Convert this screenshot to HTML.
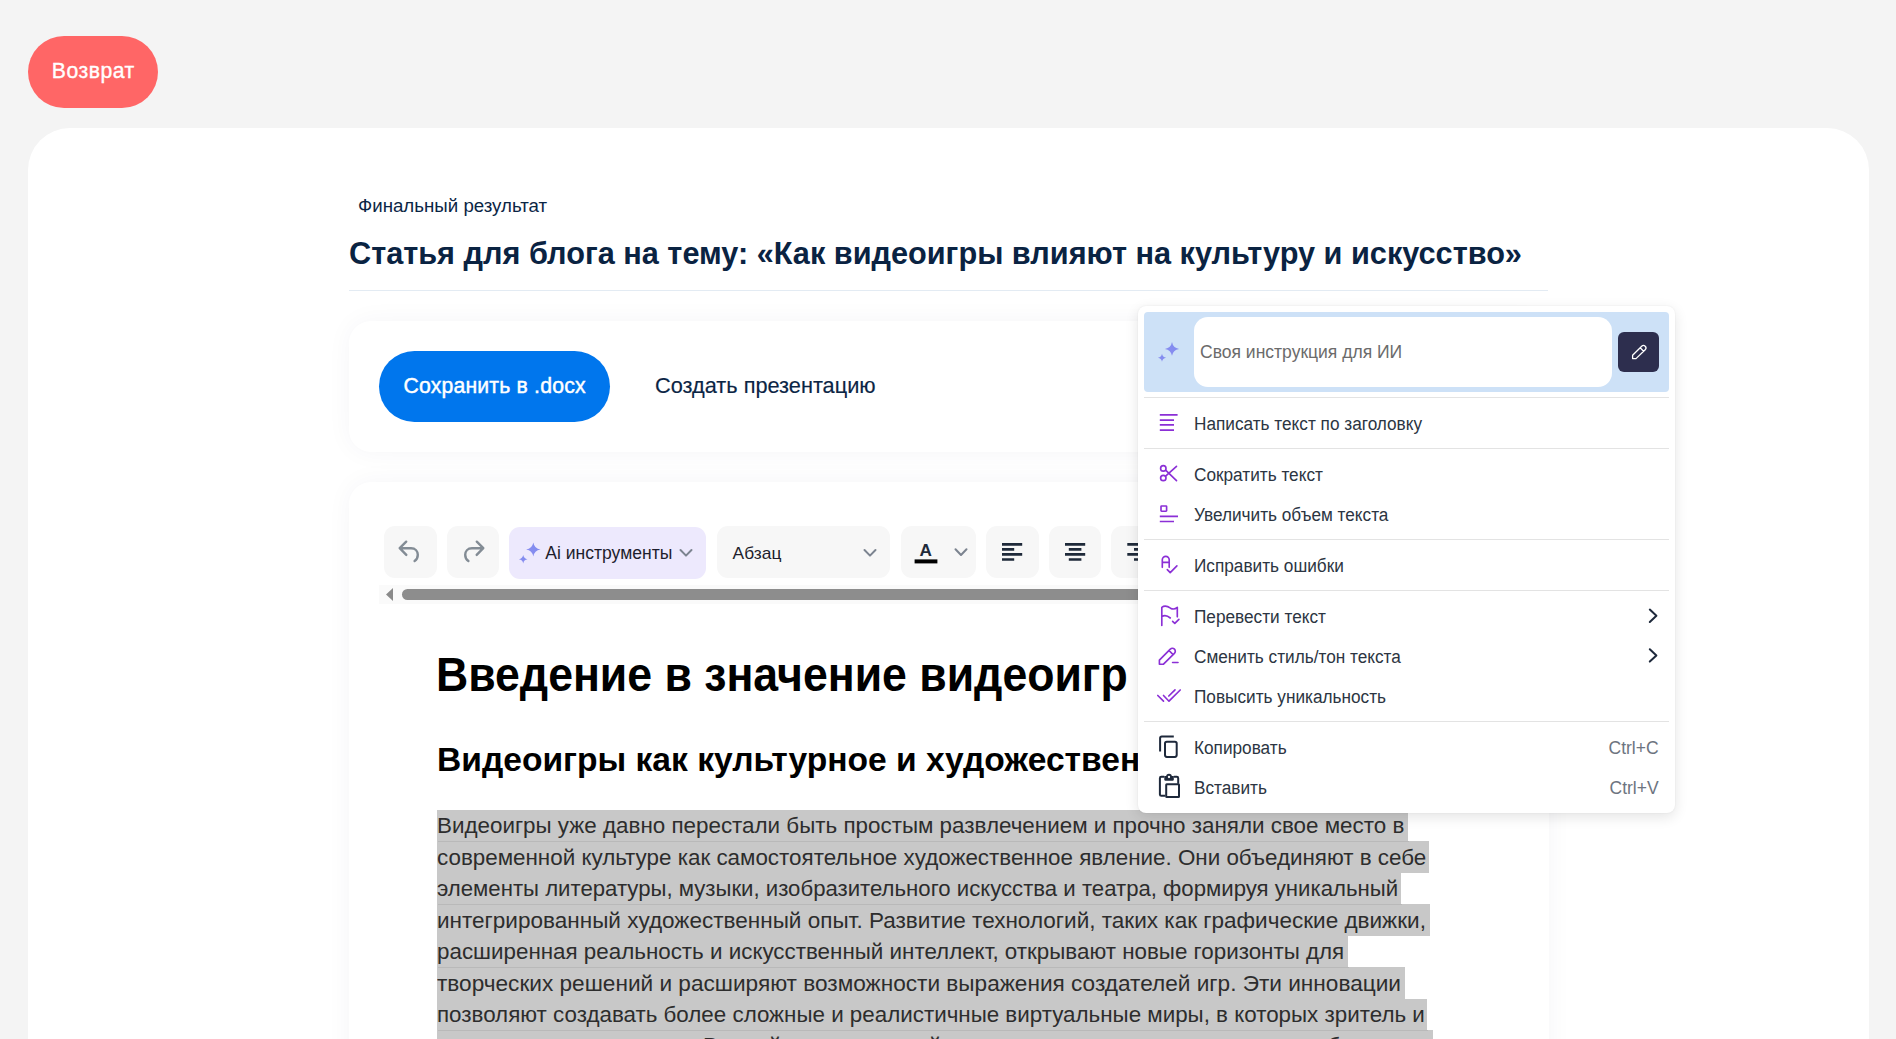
<!DOCTYPE html>
<html lang="ru">
<head>
<meta charset="utf-8">
<style>
*{box-sizing:border-box;margin:0;padding:0}
html,body{width:1896px;height:1039px;overflow:hidden;background:#f4f4f4;font-family:"Liberation Sans",sans-serif}
.abs{position:absolute}
.nw{white-space:nowrap}
#back{left:28px;top:36px;width:130px;height:72px;border-radius:36px;background:#ff6666}
#backt{left:28.3px;width:130px;top:60.2px;font-size:21.2px;line-height:21.2px;letter-spacing:0.5px;font-weight:400;-webkit-text-stroke:0.35px #fff;color:#fff;text-align:center}
#main{left:28px;top:128px;width:1841px;height:1000px;background:#fff;border-radius:42px}
#sub{left:358px;top:196.6px;font-size:18.7px;color:#0b2545;line-height:18.7px}
#title{left:349px;top:236.6px;font-size:30.68px;font-weight:700;color:#0a2342;line-height:34px}
#hr{left:349px;top:290px;width:1199px;height:1px;background:#e3ebf3}
#card1{left:349px;top:321px;width:1200px;height:131px;background:#fff;border-radius:22px;box-shadow:0 0 26px rgba(30,50,90,0.045)}
#save{left:379px;top:350.8px;width:231px;height:70.8px;border-radius:35.4px;background:#0076ed;color:#fff;font-size:21.2px;font-weight:400;-webkit-text-stroke:0.45px #fff;line-height:70px;text-align:center;letter-spacing:0.2px;text-indent:0.2px}
#pres{left:655px;top:373.9px;font-size:21.74px;-webkit-text-stroke:0.15px #0b2545;color:#0b2545;line-height:24px}
#card2{left:349px;top:482px;width:1200px;height:700px;background:#fff;border-radius:22px;box-shadow:0 0 26px rgba(30,50,90,0.045)}
.tb{position:absolute;top:526px;height:52px;background:#f7f7f7;border-radius:11px}
.sel{left:437.2px;height:31.7px;background:#c8c8c8}
.ptxt{left:437.1px;font-size:22.5px;line-height:31.45px;color:#2d2d2d;transform-origin:0 0}
#menu{left:1138px;top:306px;width:537px;height:507px;background:#fff;border-radius:8px;box-shadow:0 4px 14px rgba(0,0,0,0.11),0 0 2px rgba(0,0,0,0.07)}
.mdiv{left:1144px;width:525px;height:1px;background:#e3e3e3}
.mi{left:1194.4px;font-size:18px;line-height:18px;color:#2c3542;transform:scaleX(0.956);transform-origin:0 0}
.mk{right:237.4px;font-size:17.5px;line-height:17.5px;color:#6d7480}
</style>
</head>
<body>
<div id="back" class="abs"></div><div id="backt" class="abs nw">Возврат</div>
<div id="main" class="abs"></div>
<div id="sub" class="abs nw">Финальный результат</div>
<div id="title" class="abs nw">Статья для блога на тему: «Как видеоигры влияют на культуру и искусство»</div>
<div id="hr" class="abs"></div>
<div id="card1" class="abs"></div>
<div id="save" class="abs nw">Сохранить в .docx</div>
<div id="pres" class="abs nw">Создать презентацию</div>
<div id="card2" class="abs"></div>

<!-- toolbar -->
<div class="tb" style="left:384px;width:53px"></div>
<div class="tb" style="left:447px;width:52px"></div>
<div class="tb" style="left:509px;width:197px;background:#ede9fd;top:527px"></div>
<div class="tb" style="left:717px;width:173px"></div>
<div class="tb" style="left:901px;width:75px"></div>
<div class="tb" style="left:986px;width:53px"></div>
<div class="tb" style="left:1049px;width:52px"></div>
<div class="tb" style="left:1111px;width:52px"></div>

<!-- toolbar icons -->
<svg class="abs" style="left:0;top:0" width="1896" height="1039" viewBox="0 0 1896 1039" fill="none">
  <g stroke="#838c95" stroke-width="2.4" stroke-linecap="round" stroke-linejoin="round">
    <path d="M406.2 541.7 L399.7 548.2 L406.3 554.9 M400 548.2 H411 C415.4 548.2 417.8 551.4 417.8 554.8 C417.8 557.5 416.6 559.8 414.6 561.1"/>
    <path d="M476.8 541.7 L483.3 548.2 L476.7 554.9 M483 548.2 H472 C467.6 548.2 465.2 551.4 465.2 554.8 C465.2 557.5 466.4 559.8 468.4 561.1"/>
    <path d="M680.5 550 L686 555.6 L691.5 550" stroke="#7c8490" stroke-width="2"/>
    <path d="M864.5 550 L870 555.6 L875.5 550" stroke="#7c8490" stroke-width="2"/>
    <path d="M955.5 549.2 L961 555 L966.5 549.2" stroke="#7c8490" stroke-width="2"/>
  </g>
  <defs>
    <linearGradient id="sg" x1="0" y1="1" x2="1" y2="0">
      <stop offset="0" stop-color="#8c8df0"/><stop offset="1" stop-color="#7d8cef"/>
    </linearGradient>
  </defs>
  <g fill="url(#sg)">
    <path d="M533.30 542.60 Q534.31 548.62 540.50 549.60 Q534.31 550.58 533.30 556.60 Q532.29 550.58 526.10 549.60 Q532.29 548.62 533.30 542.60Z"/>
    <path d="M523.20 555.10 Q523.80 558.71 527.50 559.30 Q523.80 559.89 523.20 563.50 Q522.60 559.89 518.90 559.30 Q522.60 558.71 523.20 555.10Z"/>
  </g>
  <!-- color A -->
  <rect x="914.6" y="559.4" width="22.8" height="4" fill="#000"/>
  <g stroke="#1f2a3a" stroke-width="2.7" stroke-linecap="butt">
    <path d="M1002 544.3 H1022.2 M1002 549.4 H1014.2 M1002 554.4 H1022.2 M1002 559.5 H1014.2"/>
    <path d="M1065 544.3 H1085.2 M1068.8 549.4 H1081.4 M1065 554.4 H1085.2 M1068.8 559.5 H1081.4"/>
    <path d="M1127.3 544.3 H1147.5 M1134 549.4 H1147.5 M1127.3 554.4 H1147.5 M1134 559.5 H1147.5"/>
  </g>
  <!-- scrollbar -->
  <rect x="379" y="585" width="800" height="19" fill="#fafafa"/>
  <path d="M386 594.5 L393 588 L393 601 Z" fill="#8a8a8a"/>
  <rect x="402" y="589" width="760" height="11" rx="5.5" fill="#8d8d8d"/>
</svg>
<div class="abs nw" style="left:545.3px;top:544.8px;font-size:17.55px;line-height:17.55px;color:#1e1e2d">Ai инструменты</div>
<div class="abs nw" style="left:732.6px;top:545.3px;font-size:17.39px;line-height:17.39px;color:#1e1e2d">Абзац</div>
<div class="abs nw" style="left:919.6px;top:542.2px;font-size:17.2px;line-height:17.2px;font-weight:700;color:#1f2a3a">A</div>

<!-- document -->
<div class="abs nw" style="left:436px;top:651.2px;font-size:47.2px;line-height:47.2px;font-weight:700;color:#000;transform:scaleX(0.945);transform-origin:0 0">Введение в значение видеоигр</div>
<div class="abs nw" style="left:437px;top:742.6px;font-size:33.6px;line-height:33.6px;font-weight:700;color:#000">Видеоигры как культурное и художественное явление</div>
<div class="abs sel" style="top:809.80px;width:971.1px"></div>
<div class="abs sel" style="top:841.25px;width:992.0px"></div>
<div class="abs sel" style="top:872.70px;width:964.3px"></div>
<div class="abs sel" style="top:904.15px;width:992.6px"></div>
<div class="abs sel" style="top:935.60px;width:911.2px"></div>
<div class="abs sel" style="top:967.05px;width:968.1px"></div>
<div class="abs sel" style="top:998.50px;width:990.3px"></div>
<div class="abs sel" style="top:1029.95px;width:995.4px"></div>
<div class="abs nw ptxt" style="top:810.30px;transform:scaleX(0.9952)">Видеоигры уже давно перестали быть простым развлечением и прочно заняли свое место в </div>
<div class="abs nw ptxt" style="top:841.75px;transform:scaleX(0.9947)">современной культуре как самостоятельное художественное явление. Они объединяют в себе </div>
<div class="abs nw ptxt" style="top:873.20px;transform:scaleX(0.9854)">элементы литературы, музыки, изобразительного искусства и театра, формируя уникальный </div>
<div class="abs nw ptxt" style="top:904.65px;transform:scaleX(1.0012)">интегрированный художественный опыт. Развитие технологий, таких как графические движки, </div>
<div class="abs nw ptxt" style="top:936.10px;transform:scaleX(0.9942)">расширенная реальность и искусственный интеллект, открывают новые горизонты для </div>
<div class="abs nw ptxt" style="top:967.55px;transform:scaleX(1.0049)">творческих решений и расширяют возможности выражения создателей игр. Эти инновации </div>
<div class="abs nw ptxt" style="top:999.00px;transform:scaleX(0.9939)">позволяют создавать более сложные и реалистичные виртуальные миры, в которых зритель и </div>
<div class="abs nw ptxt" style="top:1030.45px;transform:scaleX(0.991)">игрок становится частью </div>
<div class="abs nw ptxt" style="top:1030.45px;left:702.6px;transform:scaleX(0.991)">В такой интерактивной среде каждое решение </div>
<div class="abs nw ptxt" style="top:1030.45px;left:1315.1px;transform:scaleX(0.991)">обретает</div>
<div class="abs" style="left:437.5px;top:841.0px;width:971.1px;height:1px;background:#b9b9b9"></div>
<div class="abs" style="left:437.5px;top:904.2px;width:964.3px;height:1px;background:#b9b9b9"></div>
<div class="abs" style="left:437.5px;top:967.1px;width:911.2px;height:1px;background:#b9b9b9"></div>
<div class="abs" style="left:437.5px;top:1029.7px;width:990.3px;height:1px;background:#b9b9b9"></div>

<!-- context menu -->
<div class="abs" id="menu"></div>
<div class="abs" style="left:1144px;top:312px;width:525px;height:80px;background:#cde1f7;border-radius:4px"></div>
<div class="abs" style="left:1194px;top:317px;width:418px;height:70px;background:#fff;border-radius:14px"></div>
<div class="abs nw" style="left:1200px;top:344.2px;font-size:17.53px;line-height:17.53px;color:#6b6b6b">Своя инструкция для ИИ</div>
<div class="abs" style="left:1618px;top:332px;width:41px;height:40px;background:#2d2e4e;border-radius:6px"></div>
<div class="abs mdiv" style="top:397px"></div>
<div class="abs mdiv" style="top:448px"></div>
<div class="abs mdiv" style="top:539px"></div>
<div class="abs mdiv" style="top:590px"></div>
<div class="abs mdiv" style="top:721px"></div>
<div class="abs nw mi" style="top:415.06px">Написать текст по заголовку</div>
<div class="abs nw mi" style="top:466.06px">Сократить текст</div>
<div class="abs nw mi" style="top:506.06px">Увеличить объем текста</div>
<div class="abs nw mi" style="top:557.06px">Исправить ошибки</div>
<div class="abs nw mi" style="top:608.06px">Перевести текст</div>
<div class="abs nw mi" style="top:648.06px">Сменить стиль/тон текста</div>
<div class="abs nw mi" style="top:688.06px">Повысить уникальность</div>
<div class="abs nw mi" style="top:739.06px">Копировать</div>
<div class="abs nw mi" style="top:779.06px">Вставить</div>
<div class="abs nw mk" style="top:739.5px">Ctrl+C</div>
<div class="abs nw mk" style="top:779.5px">Ctrl+V</div>
<svg class="abs" style="left:0;top:0" width="1896" height="1039" viewBox="0 0 1896 1039" fill="none">
  <g fill="url(#sg)">
    <path d="M1172.00 342.00 Q1172.99 347.93 1179.10 348.90 Q1172.99 349.87 1172.00 355.80 Q1171.01 349.87 1164.90 348.90 Q1171.01 347.93 1172.00 342.00Z"/>
    <path d="M1162.00 353.80 Q1162.57 357.24 1166.10 357.80 Q1162.57 358.36 1162.00 361.80 Q1161.43 358.36 1157.90 357.80 Q1161.43 357.24 1162.00 353.80Z"/>
  </g>
  <g stroke="#fff" stroke-width="1.3" stroke-linejoin="round" stroke-linecap="round">
    <path d="M1632.6 358.6 L1632.6 355.3 L1641.7 346.2 A1.75 1.75 0 0 1 1645.2 349.7 L1636 358.6 Z M1640.2 347.8 L1643.6 351.2"/>
  </g>
  <g stroke="#8b2fd6" stroke-width="1.65" stroke-linecap="round" stroke-linejoin="round">
    <path stroke-linecap="butt" d="M1159.8 414.9 H1177.6 M1159.8 420.1 H1174 M1159.8 424.9 H1174 M1159.8 430.1 H1174"/>
    <circle cx="1163.3" cy="468.4" r="2.7"/>
    <circle cx="1163.3" cy="478" r="2.7"/>
    <path d="M1165.6 470.2 L1176.5 480.7 M1165.6 476.2 L1176.5 466.4"/>
    <rect x="1161" y="506" width="5.6" height="5.2" rx="0.6"/>
    <path stroke-linecap="butt" d="M1159.8 516.4 H1178 M1159.8 521.5 H1174"/>
    <path d="M1162.3 567.3 V559.8 A3.45 3.45 0 0 1 1169.2 559.8 V567.3 M1162.3 562.3 H1169.2 M1167.3 569.7 L1170.2 572.6 L1176.9 565.9"/>
    <path d="M1161.8 625.5 V607.3 Q1165.5 604.6 1170.5 608.2 Q1174 610.2 1177.3 607.3 V616.8 M1161.8 616.6 Q1165.8 614.2 1170.3 618 M1172.6 621.3 L1174.8 623.4 L1178.9 619.3"/>
    <path d="M1159.4 664.2 H1163.5 L1174.4 653.3 A2.9 2.9 0 1 0 1170.3 649.2 L1159.4 660.1 Z M1169 650.5 L1173.1 654.6 M1172.6 662.5 H1178"/>
    <path d="M1157.8 695.5 L1163.5 701.2 M1163.5 695.5 L1169 701.2 L1180.2 690 M1168.8 696 L1175 689.8"/>
  </g>
  <g stroke="#1e293b" stroke-width="2" stroke-linecap="butt" stroke-linejoin="round">
    <path d="M1160.1 751.5 V738.3 Q1160.1 736.6 1161.8 736.6 H1173.8"/>
    <rect x="1165" y="741.7" width="11.7" height="15.2" rx="1.8"/>
    <path d="M1165.3 795.8 H1161.3 Q1159.9 795.8 1159.9 794.4 V778.2 Q1159.9 776.8 1161.3 776.8 H1164.3 M1173.8 776.8 H1176.8 Q1178.2 776.8 1178.2 778.2 V783.8"/>
    <rect x="1166.2" y="784.3" width="12.8" height="12.6" rx="0.5"/>
  </g>
  <g fill="#1e293b">
    <path d="M1164.3 776 H1173.8 V779.6 Q1173.8 780.8 1172.6 780.8 H1165.5 Q1164.3 780.8 1164.3 779.6 Z"/>
    <circle cx="1169" cy="776.6" r="2.9"/>
  </g>
  <circle cx="1169" cy="777" r="1.15" fill="#fff"/>
  <g stroke="#1e293b" stroke-width="2" stroke-linecap="round" stroke-linejoin="round">
    <path d="M1649.8 609.6 L1656.4 615.8 L1649.8 622"/>
    <path d="M1649.8 649.2 L1656.4 655.4 L1649.8 661.6"/>
  </g>
</svg>

</body>
</html>
